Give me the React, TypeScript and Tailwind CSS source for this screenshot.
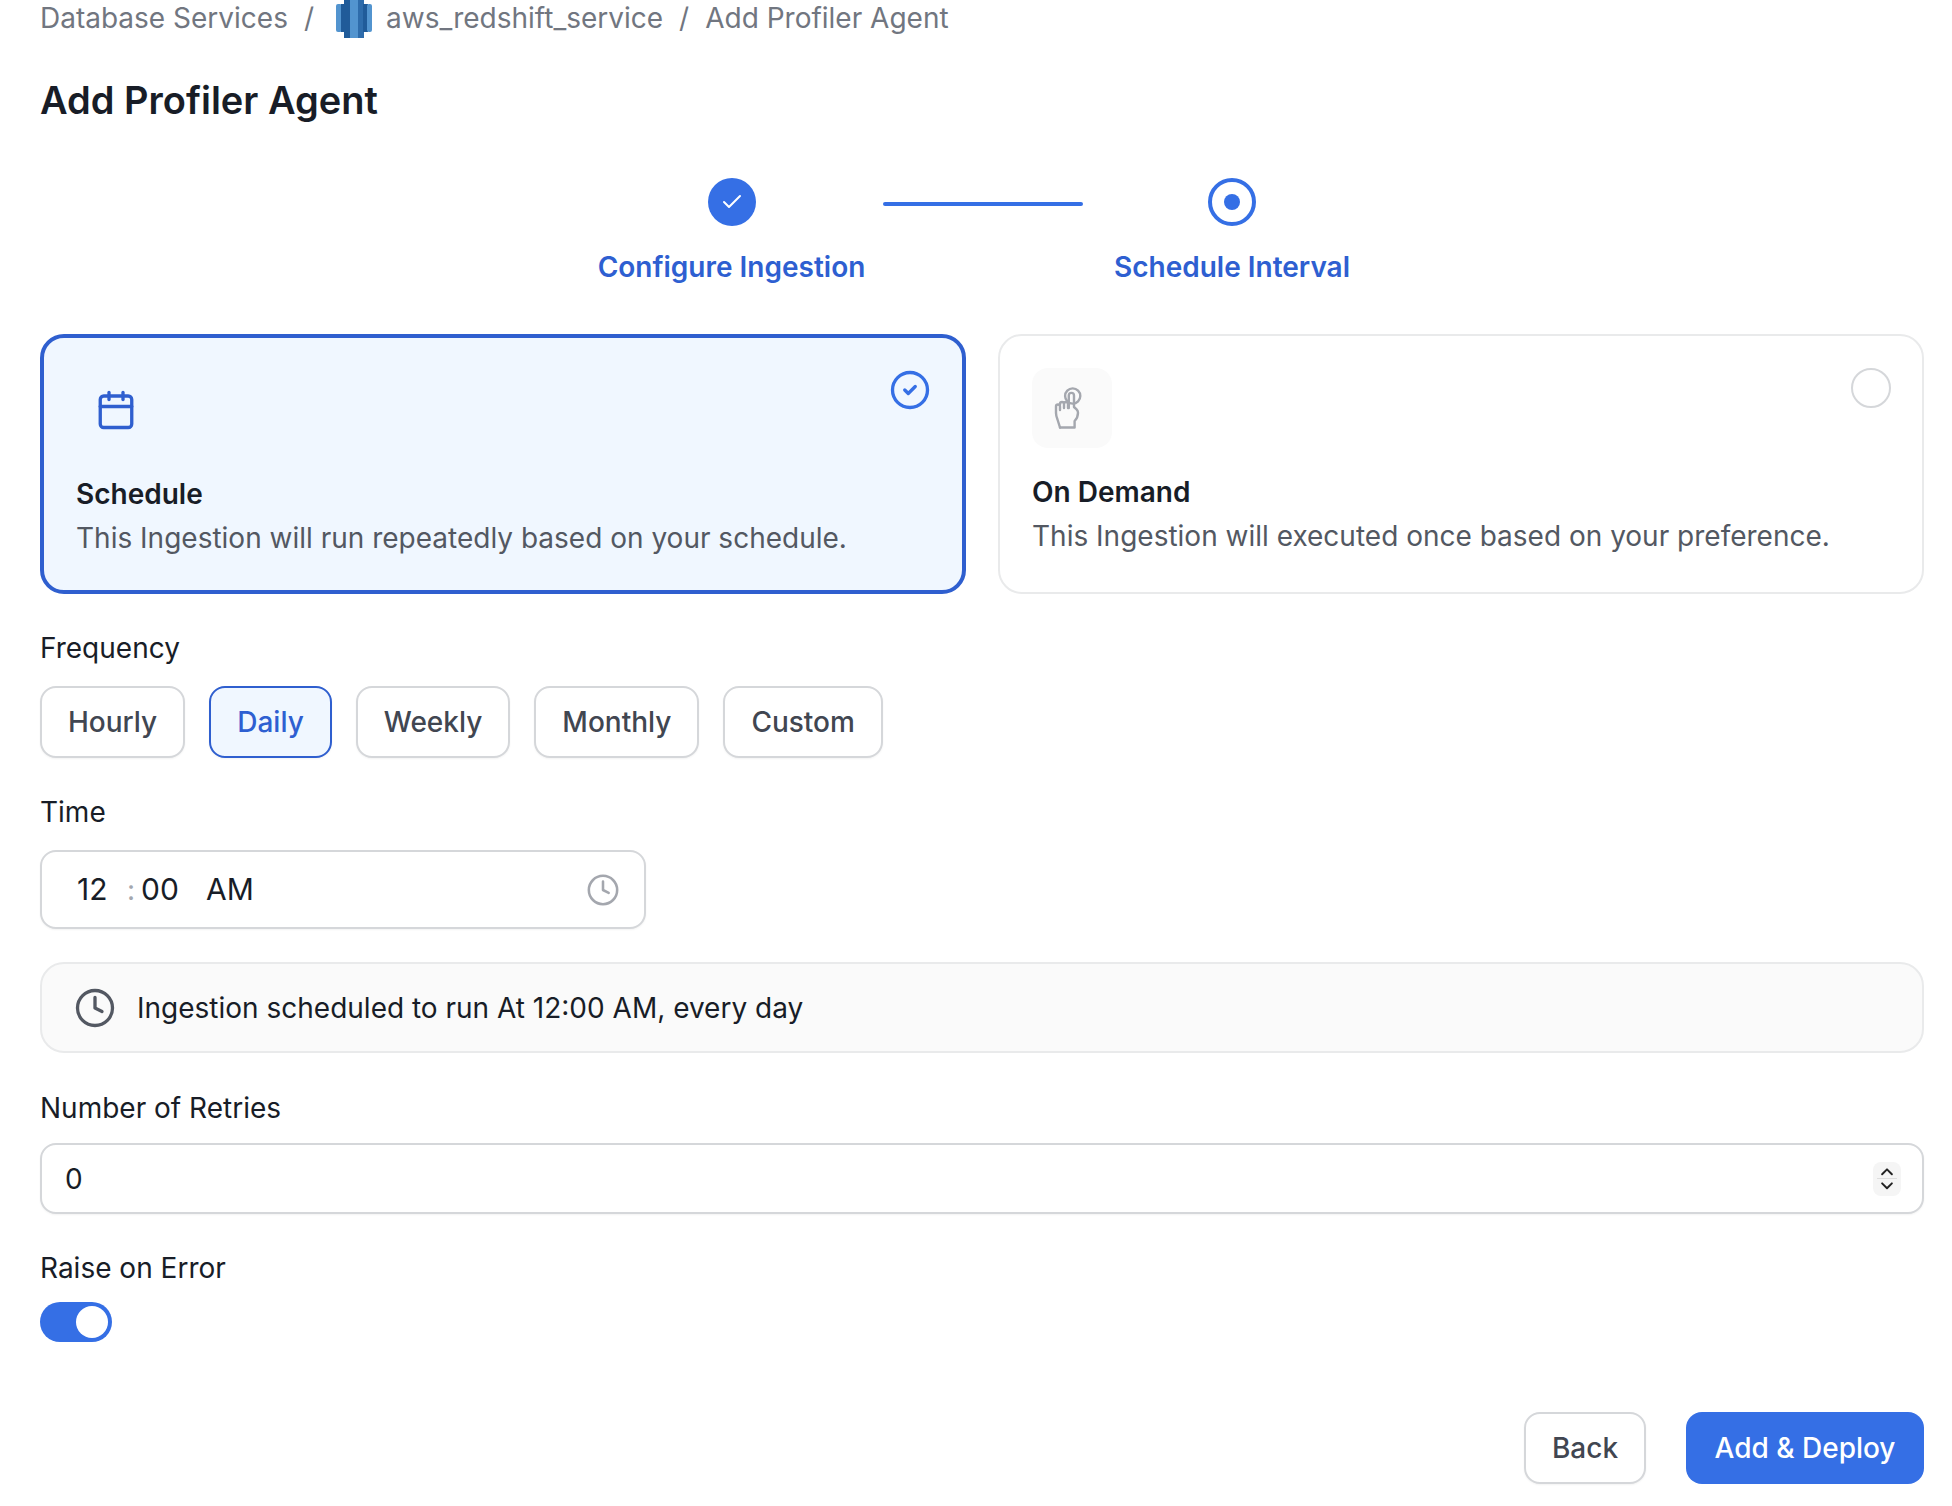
import { Calendar, Check, ChevronDown, ChevronUp, CircleCheck, Clock } from 'lucide-react';

const frequencies = ['Hourly', 'Daily', 'Weekly', 'Monthly', 'Custom'];

function RedshiftIcon() {
  return (
    <svg width="36" height="40" viewBox="0 0 36 40" className="shrink-0">
      <rect x="0" y="6" width="6" height="28" rx="2" fill="#5294cf" />
      <rect x="5" y="6" width="4" height="28" fill="#205b99" />
      <rect x="8" y="0" width="20" height="40" rx="3" fill="#2e73b8" />
      <rect x="8" y="0" width="6" height="40" fill="#205b99" />
      <rect x="14" y="0" width="8" height="40" fill="#5294cf" />
      <rect x="22" y="0" width="6" height="40" fill="#2e6cab" />
      <rect x="27" y="6" width="5" height="28" fill="#205b99" />
      <rect x="31" y="6" width="5" height="28" rx="2" fill="#5294cf" />
    </svg>
  );
}

function TapIcon() {
  return (
    <svg width="40" height="44" viewBox="0 0 40 44" fill="none" stroke="#a4a7ae" strokeWidth="2.4" strokeLinecap="round" strokeLinejoin="round">
      <circle cx="20.7" cy="10" r="7.6" />
      <path d="M8 41.5 5.5 33.5C4.5 31 4 29.5 4 27V20.5a2 2 0 0 1 4 0V24M8 19v-1a2 2 0 0 1 4 0v4M12 18a2 2 0 0 1 4 0v4" />
      <path d="M16.8 22V9.5a2.6 2.6 0 0 1 5.2 0V21l2.6 2.4c1 1 1.4 2 1.4 3.4 0 3-1.2 6-3.4 8.2v6.5H8" />
    </svg>
  );
}

export default function App() {
  return (
    <div className="h-[1506px] overflow-hidden bg-white pl-10 pr-7 font-['Inter',sans-serif] text-[28px] text-[#181d27]">
      {/* Breadcrumb */}
      <div className="flex h-9 items-center text-[#717680]">
        <span>Database Services</span>
        <span className="mx-4">/</span>
        <span className="mr-[14px] ml-[6px]">
          <RedshiftIcon />
        </span>
        <span>aws_redshift_service</span>
        <span className="mx-4">/</span>
        <span>Add Profiler Agent</span>
      </div>

      <h1 className="mt-10 h-12 text-[38px] leading-[48px] font-semibold">Add Profiler Agent</h1>

      {/* Stepper */}
      <div className="mt-[54px] ml-[558px] flex items-start font-semibold text-[#2e5fd1]">
        <div className="flex w-[267px] flex-col items-center">
          <div className="flex size-12 items-center justify-center rounded-full bg-[#356fe5]">
            <Check size={24} color="#ffffff" strokeWidth={2} />
          </div>
          <div className="mt-[21px] leading-10 whitespace-nowrap">Configure Ingestion</div>
        </div>
        <div className="mt-[24px] ml-[18px] h-1 w-[200px] rounded-full bg-[#356fe5]" />
        <div className="ml-[31px] flex w-[236px] flex-col items-center">
          <div className="flex size-12 items-center justify-center rounded-full border-4 border-[#356fe5]">
            <div className="size-4 rounded-full bg-[#356fe5]" />
          </div>
          <div className="mt-[21px] leading-10 whitespace-nowrap">Schedule Interval</div>
        </div>
      </div>

      {/* Schedule type cards */}
      <div className="mt-[47px] grid grid-cols-2 gap-8">
        <div className="relative h-[260px] rounded-3xl border-4 border-[#2f5fcf] bg-[#f0f7ff] p-8">
          <div className="flex size-20 items-center justify-center">
            <Calendar size={42} color="#2f5fcf" strokeWidth={1.9} />
          </div>
          <div className="mt-[26px] leading-9 font-semibold">Schedule</div>
          <div className="mt-[6px] leading-10 text-[#535862]">This Ingestion will run repeatedly based on your schedule.</div>
          <CircleCheck size={42} color="#356fe5" strokeWidth={1.9} className="absolute top-[31px] right-[31px]" />
        </div>
        <div className="relative h-[260px] rounded-3xl border-2 border-[#e9eaeb] bg-white p-8">
          <div className="flex size-20 items-center justify-center rounded-2xl bg-[#fafafa]">
            <TapIcon />
          </div>
          <div className="mt-[26px] leading-9 font-semibold">On Demand</div>
          <div className="mt-[6px] leading-10 text-[#535862]">This Ingestion will executed once based on your preference.</div>
          <div className="absolute top-8 right-[31px] size-10 rounded-full border-2 border-[#d5d7da]" />
        </div>
      </div>

      {/* Frequency */}
      <div className="mt-9 leading-9">Frequency</div>
      <div className="mt-5 flex gap-6">
        {frequencies.map((f) => (
          <button
            key={f}
            className={
              f === 'Daily'
                ? 'h-[72px] rounded-2xl border-2 border-[#2f5fcf] bg-[#f0f7ff] px-[26px] font-medium text-[#2e5fd1] shadow-xs'
                : 'h-[72px] rounded-2xl border-2 border-[#d5d7da] bg-white px-[26px] font-medium text-[#414651] shadow-xs'
            }
          >
            {f}
          </button>
        ))}
      </div>

      {/* Time */}
      <div className="mt-9 leading-9">Time</div>
      <div className="mt-5 flex h-[79px] w-[606px] items-center rounded-2xl border-2 border-[#d5d7da] bg-white pr-6 pl-[35px] shadow-xs">
        <span className="w-[44px] text-[30px]">12</span>
        <span className="w-[20px] text-center text-[#a4a7ae]">:</span>
        <span className="w-[40px] text-[30px]">00</span>
        <span className="ml-[25px] text-[30px]">AM</span>
        <Clock size={34} color="#a4a7ae" strokeWidth={1.8} className="ml-auto" />
      </div>

      {/* Summary */}
      <div className="mt-[33px] flex h-[91px] items-center rounded-3xl border-2 border-[#e9eaeb] bg-[#fafafa] pl-[32px]">
        <Clock size={42} color="#535862" strokeWidth={1.9} />
        <span className="ml-[21px]">Ingestion scheduled to run At 12:00 AM, every day</span>
      </div>

      {/* Retries */}
      <div className="mt-[37px] leading-9">Number of Retries</div>
      <div className="mt-[17px] flex h-[71px] items-center rounded-2xl border-2 border-[#d5d7da] bg-white pr-[21px] pl-[23px] shadow-xs">
        <span>0</span>
        <div className="ml-auto flex h-[34px] w-7 flex-col items-center justify-center rounded-lg bg-[#f5f5f5]">
          <ChevronUp size={20} color="#222222" strokeWidth={2.4} className="-mb-[3px]" />
          <div className="h-px w-5 bg-[#dddddd]" />
          <ChevronDown size={20} color="#222222" strokeWidth={2.4} className="-mt-[3px]" />
        </div>
      </div>

      {/* Raise on error */}
      <div className="mt-9 leading-9">Raise on Error</div>
      <div className="mt-4 flex h-10 w-[72px] items-center justify-end rounded-full bg-[#356fe5] pr-1">
        <div className="size-8 rounded-full bg-white" />
      </div>

      {/* Footer */}
      <div className="mt-[70px] flex justify-end gap-10">
        <button className="h-[72px] w-[122px] rounded-2xl border-2 border-[#d5d7da] bg-white font-medium text-[#414651] shadow-xs">Back</button>
        <button className="h-[72px] w-[238px] rounded-2xl bg-[#356fe5] font-medium text-white">Add &amp; Deploy</button>
      </div>
    </div>
  );
}
